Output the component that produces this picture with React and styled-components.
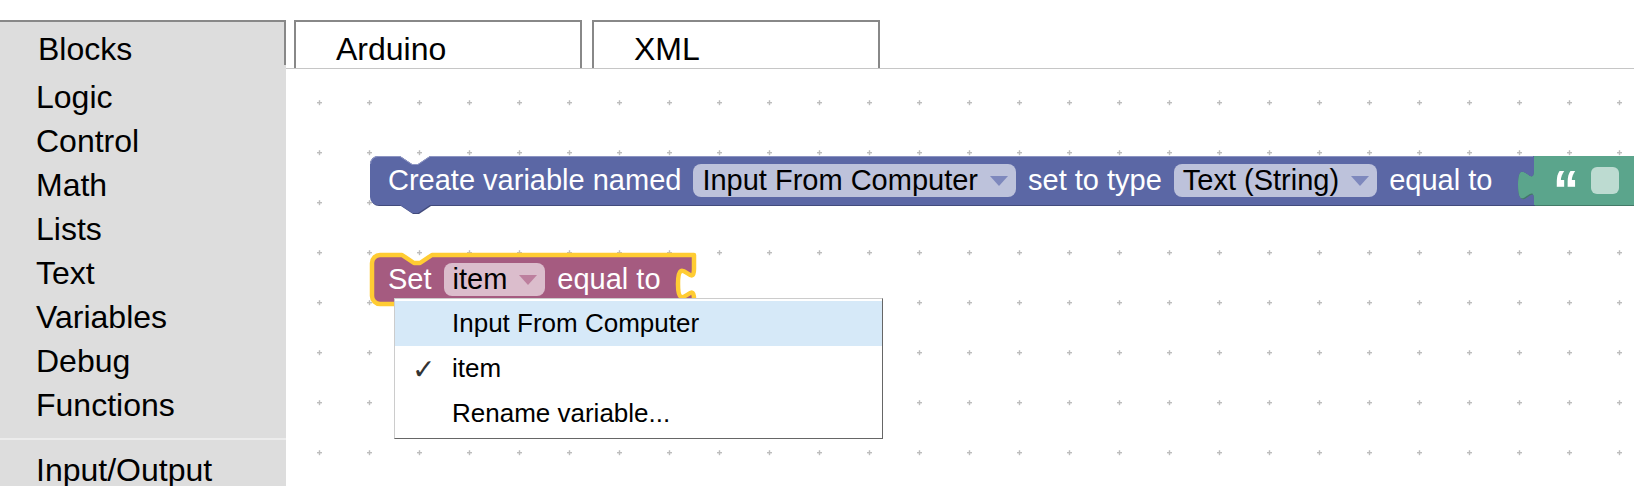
import React from 'react'
import styled, { createGlobalStyle } from 'styled-components'

const GlobalStyle = createGlobalStyle`
  html, body {
    margin: 0;
    padding: 0;
    background: #fff;
  }
  body {
    font-family: 'Liberation Sans', Arial, sans-serif;
    overflow: hidden;
  }
`

const c = {
  border: '#888',
  sidebar: '#ddd',
  rule: '#c6c6c6',
  grid: '#bdbdbd',
  varBlock: '#5b67a5',
  varDark: '#424b7c',
  setBlock: '#a55b80',
  setDark: '#7a4360',
  textBlock: '#5ba58c',
  textDark: '#437a67',
  highlight: '#fc3',
  menuHover: '#d6e9f8',
}

const CATEGORIES = ['Logic', 'Control', 'Math', 'Lists', 'Text', 'Variables', 'Debug', 'Functions']
const BLOCK_H = 49

// block outline with top notch, bottom tab and an empty value input on the right
const statementPath = (w, h) =>
  `M 0,8 A 8,8 0 0 1 8,0 H 30 l 12,8 6,0 12,-8 H ${w} V 8 v 6 c 0,20 -16,-16 -16,15 s 16,-5 16,15 V ${h} H 60 l -12,8 -6,0 -12,-8 H 8 A 8,8 0 0 1 0,${h - 8} Z`

const valuePath = (w, h) =>
  `M 16,0 H ${w} V ${h} H 16 V 44 C 16,24 0,60 0,29 C 0,-2 16,34 16,14 Z`

const Page = styled.div`
  display: flex;
  height: 486px;
  padding-top: 20px;
  box-sizing: border-box;
`

const Sidebar = styled.aside`
  flex: none;
  width: 286px;
  display: flex;
  flex-direction: column;
  background: ${c.sidebar};
  color: #000;
`

const SidebarHeader = styled.div`
  height: 48px;
  box-sizing: border-box;
  padding: 11px 0 0 38px;
  border-top: 2px solid ${c.border};
  border-right: 2px solid ${c.border};
  font-size: 32px;
  line-height: 32px;
`

const CategoryList = styled.ul`
  list-style: none;
  margin: 0;
  padding: 10px 0 0;
`

const Category = styled.li`
  padding-left: 36px;
  font-size: 32px;
  line-height: 44px;
  white-space: nowrap;
`

const Separator = styled.li`
  height: 2px;
  margin: 11px 0 8px;
  background: #ececec;
`

const Main = styled.main`
  flex: 1;
  min-width: 0;
  display: flex;
  flex-direction: column;
`

const TabBar = styled.nav`
  flex: none;
  display: flex;
  gap: 10px;
  height: 49px;
  box-sizing: border-box;
  padding-left: 8px;
  border-bottom: 1px solid ${c.rule};
`

const Tab = styled.div`
  width: 288px;
  box-sizing: border-box;
  padding: 11px 0 0 40px;
  border: 2px solid ${c.border};
  border-bottom: none;
  background: #fff;
  font-size: 32px;
  line-height: 32px;
  color: #000;
`

const Workspace = styled.section`
  flex: 1;
  position: relative;
  overflow: hidden;
  background: #fff;
`

const GridLayer = styled.svg`
  position: absolute;
  inset: 0;
  width: 100%;
  height: 100%;
`

const BlockRoot = styled.div`
  position: absolute;
  left: ${p => p.$x}px;
  top: ${p => p.$y}px;
  width: ${p => p.$w}px;
  height: ${BLOCK_H}px;
`

const BlockShape = styled.svg`
  position: absolute;
  left: 0;
  top: 0;
  overflow: visible;
`

const BlockRow = styled.div`
  position: relative;
  display: flex;
  align-items: center;
  gap: ${p => p.$gap || 12}px;
  height: 100%;
  padding-left: ${p => p.$pad || 16}px;
  color: #fff;
  font-size: 29px;
  line-height: 33px;
  white-space: nowrap;
`

const Dropdown = styled.span`
  display: inline-flex;
  align-items: center;
  gap: 12px;
  height: 33px;
  padding: 0 8px 0 9px;
  border-radius: 8px;
  background: ${p => p.$bg};
  color: #000;
`

const Quote = styled.span`
  font-size: 52px;
  font-weight: bold;
  line-height: 33px;
  color: #fff;
  padding-top: 18px;
`

const EmptyField = styled.span`
  width: 28px;
  height: 27px;
  border-radius: 6px;
  background: #bddbd1;
`

const Menu = styled.div`
  position: absolute;
  left: 108px;
  top: 229px;
  width: 489px;
  box-sizing: border-box;
  padding: 2px 0;
  background: #fff;
  border: 1px solid;
  border-color: #ccc #666 #666 #ccc;
  font-family: 'Liberation Sans', Arial, sans-serif;
  font-size: 26px;
  color: #000;
`

const MenuItem = styled.div`
  position: relative;
  height: 45px;
  line-height: 45px;
  padding-left: 57px;
  background: ${p => (p.$active ? c.menuHover : 'transparent')};
`

const Check = styled.span`
  position: absolute;
  left: 17px;
  top: 1px;
  font-family: 'DejaVu Sans', sans-serif;
  font-size: 28px;
  color: #333;
`

const Arrow = ({ color }) => (
  <svg width='18' height='10' viewBox='0 0 18 10'>
    <path d='M 0,0 H 18 L 9,10 Z' fill={color} />
  </svg>
)

const VarDropdown = ({ label, bg, arrow }) => (
  <Dropdown $bg={bg}>
    {label}
    <Arrow color={arrow} />
  </Dropdown>
)

const Grid = () => (
  <GridLayer>
    <defs>
      <pattern id='grid' width='50' height='50' patternUnits='userSpaceOnUse'>
        <rect x='31' y='33' width='5' height='1.4' fill={c.grid} />
        <rect x='32.8' y='31.2' width='1.4' height='5' fill={c.grid} />
      </pattern>
    </defs>
    <rect width='100%' height='100%' fill='url(#grid)' />
  </GridLayer>
)

const CreateVariableBlock = () => {
  const w = 1164
  const d = statementPath(w, BLOCK_H)

  return (
    <BlockRoot $x={84} $y={87} $w={w}>
      <BlockShape width={w} height={BLOCK_H + 10}>
        <path d={d} fill={c.varDark} transform='translate(1,1)' />
        <path d={d} fill={c.varBlock} />
        <path d={`M 0.5,8 A 7.5,7.5 0 0 1 8,0.5 H 30 l 12,8 6,0 12,-8 H ${w - 1}`} fill='none' stroke='#8c94c2' />
      </BlockShape>
      <BlockRow $pad={18}>
        <span>Create variable named</span>
        <VarDropdown label='Input From Computer' bg='#bdc2db' arrow='#7e88bd' />
        <span>set to type</span>
        <VarDropdown label='Text (String)' bg='#bdc2db' arrow='#7e88bd' />
        <span>equal to</span>
      </BlockRow>
    </BlockRoot>
  )
}

const TextBlock = () => {
  const w = 440
  const d = valuePath(w, BLOCK_H)

  return (
    <BlockRoot $x={1232} $y={87} $w={w}>
      <BlockShape width={w} height={BLOCK_H + 2}>
        <path d={d} fill={c.textDark} transform='translate(1,1)' />
        <path d={d} fill={c.textBlock} />
      </BlockShape>
      <BlockRow $pad={35} $gap={12}>
        <Quote>“</Quote>
        <EmptyField />
        <Quote>”</Quote>
      </BlockRow>
    </BlockRoot>
  )
}

const SetVariableBlock = () => {
  const w = 322
  const d = statementPath(w, BLOCK_H)

  return (
    <BlockRoot $x={86} $y={186} $w={w}>
      <BlockShape width={w} height={BLOCK_H + 10}>
        <path d={d} fill={c.setDark} transform='translate(1,1)' />
        <path d={d} fill={c.setBlock} stroke={c.highlight} strokeWidth='4.5' strokeLinejoin='round' />
      </BlockShape>
      <BlockRow $pad={16}>
        <span>Set</span>
        <VarDropdown label='item' bg='#dbbdcc' arrow='#bd7f9e' />
        <span>equal to</span>
      </BlockRow>
    </BlockRoot>
  )
}

const VariableMenu = () => (
  <Menu>
    <MenuItem $active>Input From Computer</MenuItem>
    <MenuItem>
      <Check>✓</Check>
      item
    </MenuItem>
    <MenuItem>Rename variable...</MenuItem>
  </Menu>
)

const App = () => (
  <>
    <GlobalStyle />
    <Page>
      <Sidebar>
        <SidebarHeader>Blocks</SidebarHeader>
        <CategoryList>
          {CATEGORIES.map(name => (
            <Category key={name}>{name}</Category>
          ))}
          <Separator />
          <Category>Input/Output</Category>
        </CategoryList>
      </Sidebar>

      <Main>
        <TabBar>
          <Tab>Arduino</Tab>
          <Tab>XML</Tab>
        </TabBar>
        <Workspace>
          <Grid />
          <CreateVariableBlock />
          <TextBlock />
          <SetVariableBlock />
          <VariableMenu />
        </Workspace>
      </Main>
    </Page>
  </>
)

export default App
